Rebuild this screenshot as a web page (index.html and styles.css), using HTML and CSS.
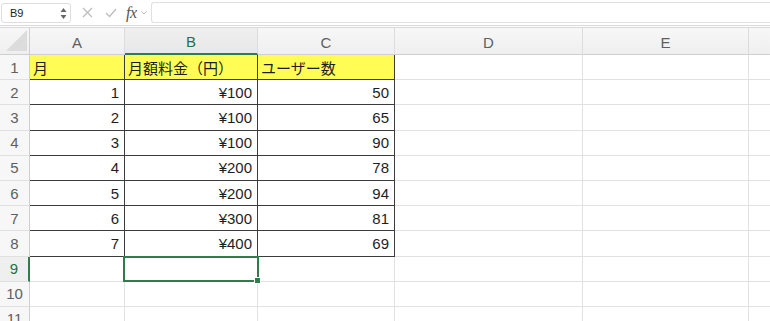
FILE: index.html
```html
<!DOCTYPE html>
<html lang="ja">
<head>
  <meta charset="UTF-8">
  <title>Sheet</title>
  <link rel="stylesheet" href="styles.css">
</head>
<body>
  <div class="toolbar">
    <div class="namebox">
      <span>B9</span>
      <svg class="spin" width="7" height="13" viewBox="0 0 7 13">
        <path d="M0.5 5 L3.5 1 L6.5 5 Z" fill="#666"/>
        <path d="M0.5 8 L3.5 12 L6.5 8 Z" fill="#666"/>
      </svg>
    </div>
    <div class="tools">
      <svg width="11" height="11" viewBox="0 0 11 11"><path d="M1 1 L10 10 M10 1 L1 10" stroke="#bdbdbd" stroke-width="1.3"/></svg>
      <svg width="12" height="10" viewBox="0 0 12 10"><path d="M1 5 L4.5 8.5 L11 1" fill="none" stroke="#bdbdbd" stroke-width="1.3"/></svg>
      <span class="fx">fx</span>
      <svg width="6" height="4" viewBox="0 0 6 4"><path d="M0.5 0.5 L3 3 L5.5 0.5" fill="none" stroke="#bbb" stroke-width="1"/></svg>
    </div>
    <div class="formula"></div>
  </div>

  <div class="sheet">
    <div class="corner">
      <svg width="21" height="21" viewBox="0 0 21 21"><path d="M21 0 L21 21 L0 21 Z" fill="#dcdcdc"/></svg>
    </div>
    <div class="colhead">A</div>
    <div class="colhead sel">B</div>
    <div class="colhead">C</div>
    <div class="colhead">D</div>
    <div class="colhead">E</div>
    <div class="colhead last"></div>

    <div class="rowhead">1</div>
    <div class="cell tb hd">月</div>
    <div class="cell tb hd">月額料金（円）</div>
    <div class="cell tb hd">ユーザー数</div>
    <div class="cell"></div><div class="cell"></div><div class="cell last"></div>

    <div class="rowhead">2</div>
    <div class="cell tb num">1</div><div class="cell tb num">¥100</div><div class="cell tb num">50</div>
    <div class="cell"></div><div class="cell"></div><div class="cell last"></div>

    <div class="rowhead">3</div>
    <div class="cell tb num">2</div><div class="cell tb num">¥100</div><div class="cell tb num">65</div>
    <div class="cell"></div><div class="cell"></div><div class="cell last"></div>

    <div class="rowhead">4</div>
    <div class="cell tb num">3</div><div class="cell tb num">¥100</div><div class="cell tb num">90</div>
    <div class="cell"></div><div class="cell"></div><div class="cell last"></div>

    <div class="rowhead">5</div>
    <div class="cell tb num">4</div><div class="cell tb num">¥200</div><div class="cell tb num">78</div>
    <div class="cell"></div><div class="cell"></div><div class="cell last"></div>

    <div class="rowhead">6</div>
    <div class="cell tb num">5</div><div class="cell tb num">¥200</div><div class="cell tb num">94</div>
    <div class="cell"></div><div class="cell"></div><div class="cell last"></div>

    <div class="rowhead">7</div>
    <div class="cell tb num">6</div><div class="cell tb num">¥300</div><div class="cell tb num">81</div>
    <div class="cell"></div><div class="cell"></div><div class="cell last"></div>

    <div class="rowhead">8</div>
    <div class="cell tb num">7</div><div class="cell tb num">¥400</div><div class="cell tb num">69</div>
    <div class="cell"></div><div class="cell"></div><div class="cell last"></div>

    <div class="rowhead sel">9</div>
    <div class="cell"></div>
    <div class="cell active"><div class="selbox"><span class="handle"></span></div></div>
    <div class="cell"></div><div class="cell"></div><div class="cell"></div><div class="cell last"></div>

    <div class="rowhead">10</div>
    <div class="cell"></div><div class="cell"></div><div class="cell"></div><div class="cell"></div><div class="cell"></div><div class="cell last"></div>

    <div class="rowhead">11</div>
    <div class="cell"></div><div class="cell"></div><div class="cell"></div><div class="cell"></div><div class="cell"></div><div class="cell last"></div>
  </div>
</body>
</html>
```

FILE: styles.css
```css
html {
  font-size: 15px;
}

body {
  margin: 0;
  padding: 0;
  width: 770px;
  height: 321px;
  overflow: hidden;
  background-color: #fff;
  font-family: "Liberation Sans", Arial, "Noto Sans CJK JP", sans-serif;
  color: #1e1e1e;
}

/* formula bar */
.toolbar {
  height: 25px;
  display: flex;
  align-items: center;
  border-bottom: 3px double #d9d9d9;
  box-sizing: content-box;
}

.namebox {
  width: 70px;
  height: 20px;
  margin-left: 1px;
  border: 1px solid #dedede;
  border-radius: 3px;
  display: flex;
  align-items: center;
  justify-content: space-between;
  padding: 0 3px 0 8px;
  box-sizing: border-box;
  font-size: 11px;
  color: #222;
}

.namebox .spin {
  margin-top: 1px;
}

.tools {
  width: 80px;
  display: flex;
  align-items: center;
  padding-left: 11px;
  box-sizing: border-box;
}

.tools svg:first-child {
  margin-right: 12px;
}

.tools svg:nth-child(2) {
  margin-right: 9px;
}

.fx {
  font-family: "Liberation Serif", "Times New Roman", serif;
  font-style: italic;
  font-size: 16px;
  color: #555;
  margin-right: 4px;
  letter-spacing: -0.5px;
}

.formula {
  flex: 1;
  height: 19px;
  border: 1px solid #e0e0e0;
  border-right: none;
  border-radius: 3px 0 0 3px;
}

/* grid */
.sheet {
  display: grid;
  grid-template-columns: 30px 95px 133px 137px 188px 166px 1fr;
  grid-template-rows: 27px;
  grid-auto-rows: 25.2px;
}

.corner,
.colhead {
  background: linear-gradient(#f7f7f7, #efefef);
  border-bottom: 1px solid #cfcfcf;
  border-right: 1px solid #dcdcdc;
  box-sizing: border-box;
}

.corner {
  display: flex;
  align-items: flex-end;
  justify-content: flex-end;
  padding: 0 2px 3px 0;
  border-right-color: #d0d0d0;
}

.colhead {
  display: flex;
  align-items: center;
  justify-content: center;
  font-size: 15px;
  color: #5f5f5f;
  padding-top: 2px;
}

.colhead.sel {
  color: #237346;
  background: linear-gradient(#efefef, #e8e8e8);
  border-bottom: 2px solid #2f7d4c;
}

.colhead.last,
.cell.last {
  border-right: none;
}

.rowhead {
  background-color: #f7f7f7;
  border-right: 1px solid #cfcfcf;
  border-bottom: 1px solid #e0e0e0;
  box-sizing: border-box;
  display: flex;
  align-items: center;
  justify-content: center;
  font-size: 15px;
  color: #5f5f5f;
}

.rowhead.sel {
  color: #237346;
  background-color: #efefef;
  border-right: 2px solid #2f7d4c;
}

.cell {
  border-right: 1px solid #e1e1e1;
  border-bottom: 1px solid #e1e1e1;
  box-sizing: border-box;
  display: flex;
  align-items: center;
  padding: 0 5px 0 3px;
  font-size: 15px;
  white-space: nowrap;
}

.cell.tb {
  border-right-color: #3c3c3c;
  border-bottom-color: #3c3c3c;
}

.cell.hd {
  background-color: #fffd55;
  font-family: "Noto Sans CJK JP", sans-serif;
  font-size: 15px;
}

.cell.num {
  justify-content: flex-end;
}

.cell.active {
  position: relative;
}

.selbox {
  position: absolute;
  left: -2px;
  top: -1px;
  right: -2px;
  bottom: -1px;
  border: 2px solid #2f7d4c;
}

.handle {
  position: absolute;
  right: -4px;
  bottom: -4px;
  width: 5px;
  height: 5px;
  background-color: #2f7d4c;
  border: 1px solid #fff;
}
```
